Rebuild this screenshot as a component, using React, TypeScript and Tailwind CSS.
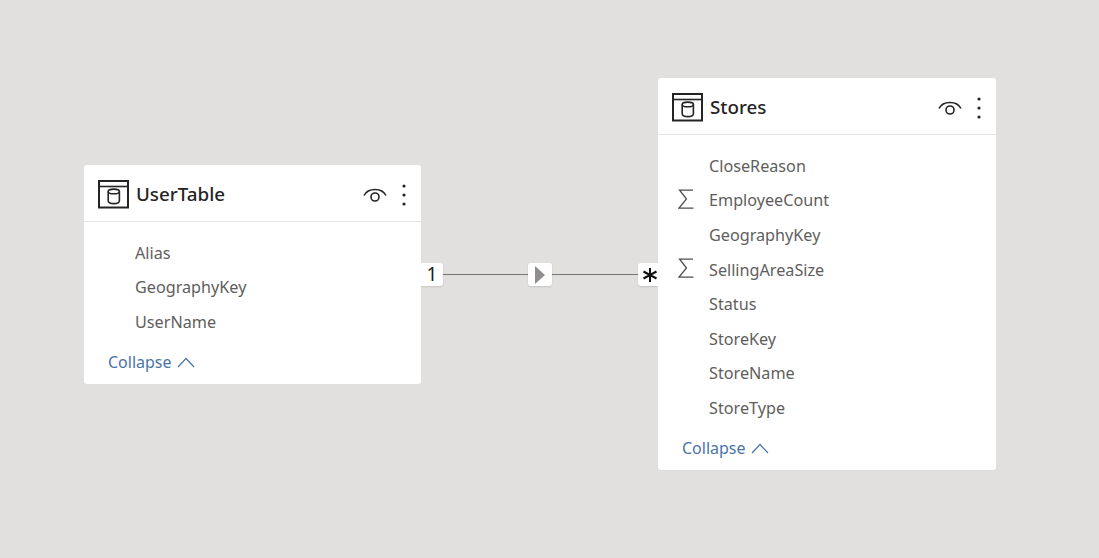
const FONT = "font-['Noto_Sans','Open_Sans',sans-serif]";

function TableIcon() {
  return (
    <svg width="31" height="29" viewBox="0 0 31 29" fill="none" stroke="#252423" className="shrink-0">
      <rect x="1" y="1" width="29" height="26.5" strokeWidth="2" />
      <path d="M1 6.5H30" strokeWidth="1.6" />
      <ellipse cx="15.8" cy="11.4" rx="5.6" ry="2.3" strokeWidth="1.6" />
      <path d="M10.2 11.4V20.8C10.2 22.8 12.4 23.6 15.8 23.6C19.2 23.6 21.4 22.8 21.4 20.8V11.4" strokeWidth="1.6" />
    </svg>
  );
}

function EyeIcon() {
  return (
    <svg width="24" height="16" viewBox="0 0 24 16" fill="none" stroke="#252423" strokeWidth="1.6" className="shrink-0">
      <path d="M1 8.5C5 0.5 19 0.5 23 8.5" />
      <circle cx="12" cy="10" r="4" />
    </svg>
  );
}

function MoreIcon() {
  return (
    <svg width="4" height="22" viewBox="0 0 4 22" fill="#252423" className="shrink-0">
      <circle cx="2" cy="2" r="1.6" />
      <circle cx="2" cy="11" r="1.6" />
      <circle cx="2" cy="20" r="1.6" />
    </svg>
  );
}

function SumIcon() {
  return (
    <svg width="16" height="20" viewBox="0 0 16 20" fill="none" stroke="#4f4d4b" strokeWidth="1.25" className="shrink-0">
      <path d="M15 1H1.5L8.5 10L1 19H15.5" />
    </svg>
  );
}

function ChevronUp() {
  return (
    <svg width="18" height="11" viewBox="0 0 18 11" fill="none" stroke="#4a74a8" strokeWidth="1.2">
      <path d="M1 10L9 1.5L17 10" />
    </svg>
  );
}

type Field = { name: string; sum?: boolean };

function TableCard({ title, fields, className }: { title: string; fields: Field[]; className: string }) {
  return (
    <div className={`absolute flex flex-col rounded-[3px] bg-white ${FONT} ${className}`}>
      <div className="flex h-[57px] shrink-0 items-center border-b border-[#e6e6e6] pl-[14px] pr-[15px] pt-[3px]">
        <TableIcon />
        <span className="ml-[7px] text-[18.8px] font-medium text-[#252423]">{title}</span>
        <div className="ml-auto flex items-center gap-[15px]">
          <EyeIcon />
          <MoreIcon />
        </div>
      </div>
      <div className="flex flex-col pt-[13.8px]">
        {fields.map((f) => (
          <div key={f.name} className="relative flex h-[34.55px] items-center pl-[51px]">
            {f.sum ? (
              <span className="absolute left-[20px] top-[6px]">
                <SumIcon />
              </span>
            ) : null}
            <span className="text-[16.2px] text-[#605e5c]">{f.name}</span>
          </div>
        ))}
      </div>
      <div className="mb-[10px] mt-auto flex items-center gap-[5px] pl-[24px] text-[16px] text-[#4a74a8]">
        Collapse
        <ChevronUp />
      </div>
    </div>
  );
}

export default function App() {
  return (
    <div className={`relative h-[558px] w-[1099px] overflow-hidden bg-[#e1e0de] ${FONT}`}>
      <div className="absolute left-[421px] top-[274px] h-px w-[237px] bg-[#777674]" />
      <div className="absolute left-[421px] top-[263px] flex h-[23px] w-[22px] items-center justify-center rounded-r-[3px] bg-white text-[19px] text-[#201f1e] shadow-[0_1px_2px_rgba(0,0,0,0.12)]">
        1
      </div>
      <div className="absolute left-[528px] top-[263px] flex h-[23px] w-[24px] items-center justify-center rounded-[3px] bg-white shadow-[0_1px_2px_rgba(0,0,0,0.12)]">
        <svg width="10" height="18" viewBox="0 0 10 18" fill="#8f8e8c">
          <path d="M0 0L10 9L0 18Z" />
        </svg>
      </div>
      <div className="absolute left-[638px] top-[263px] flex h-[23px] w-[20px] items-center justify-center rounded-l-[3px] bg-white pl-[3px] shadow-[0_1px_2px_rgba(0,0,0,0.12)]">
        <svg width="16" height="16" viewBox="0 0 16 16" fill="none" stroke="#111" strokeWidth="2">
          <path d="M8 1V15M1.5 4.5L14.5 11.5M14.5 4.5L1.5 11.5" />
        </svg>
      </div>
      <TableCard
        title="UserTable"
        className="left-[84px] top-[165px] h-[219px] w-[337px]"
        fields={[{ name: "Alias" }, { name: "GeographyKey" }, { name: "UserName" }]}
      />
      <TableCard
        title="Stores"
        className="left-[658px] top-[78px] h-[392px] w-[338px]"
        fields={[
          { name: "CloseReason" },
          { name: "EmployeeCount", sum: true },
          { name: "GeographyKey" },
          { name: "SellingAreaSize", sum: true },
          { name: "Status" },
          { name: "StoreKey" },
          { name: "StoreName" },
          { name: "StoreType" },
        ]}
      />
    </div>
  );
}
